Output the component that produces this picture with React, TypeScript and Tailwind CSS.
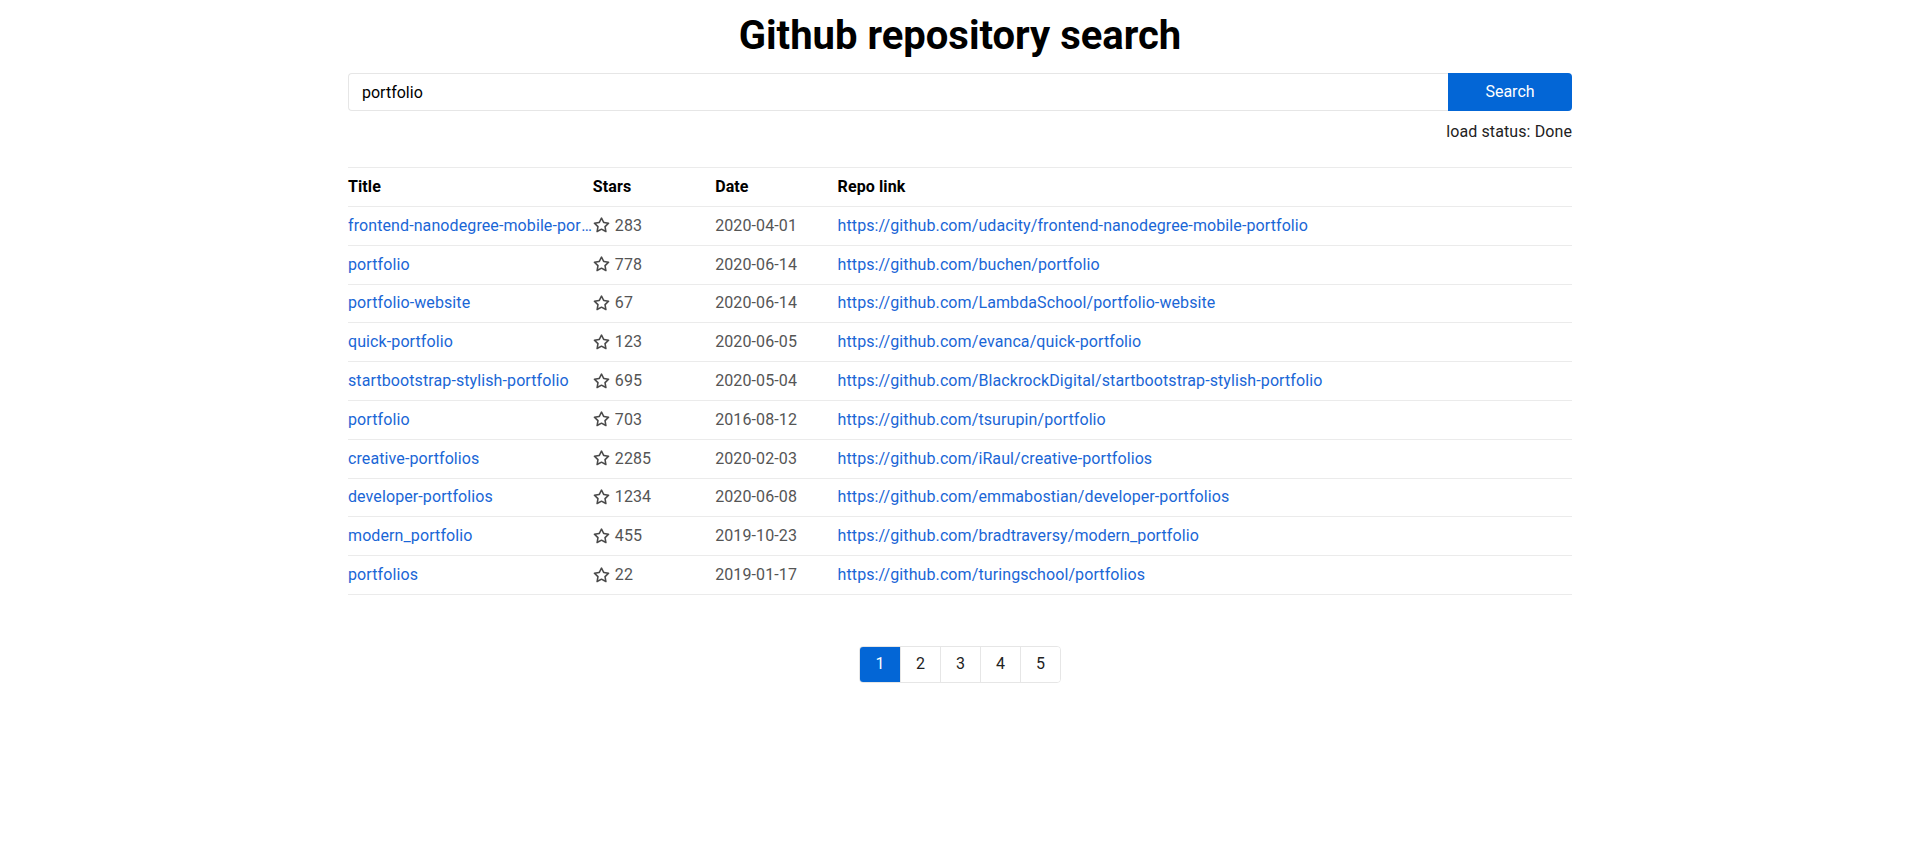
import React, { useState } from 'react';

type Repo = {
  title: string;
  stars: number;
  date: string;
  url: string;
};

const repos: Repo[] = [
  { title: 'frontend-nanodegree-mobile-portfolio', stars: 283, date: '2020-04-01', url: 'https://github.com/udacity/frontend-nanodegree-mobile-portfolio' },
  { title: 'portfolio', stars: 778, date: '2020-06-14', url: 'https://github.com/buchen/portfolio' },
  { title: 'portfolio-website', stars: 67, date: '2020-06-14', url: 'https://github.com/LambdaSchool/portfolio-website' },
  { title: 'quick-portfolio', stars: 123, date: '2020-06-05', url: 'https://github.com/evanca/quick-portfolio' },
  { title: 'startbootstrap-stylish-portfolio', stars: 695, date: '2020-05-04', url: 'https://github.com/BlackrockDigital/startbootstrap-stylish-portfolio' },
  { title: 'portfolio', stars: 703, date: '2016-08-12', url: 'https://github.com/tsurupin/portfolio' },
  { title: 'creative-portfolios', stars: 2285, date: '2020-02-03', url: 'https://github.com/iRaul/creative-portfolios' },
  { title: 'developer-portfolios', stars: 1234, date: '2020-06-08', url: 'https://github.com/emmabostian/developer-portfolios' },
  { title: 'modern_portfolio', stars: 455, date: '2019-10-23', url: 'https://github.com/bradtraversy/modern_portfolio' },
  { title: 'portfolios', stars: 22, date: '2019-01-17', url: 'https://github.com/turingschool/portfolios' },
];

// octicon star-16
const StarIcon = () => (
  <svg viewBox="0 0 16 16" width="17" height="17" className="mr-[5px] shrink-0 fill-[#4a4a4a]">
    <path d="M8 .25a.75.75 0 0 1 .673.418l1.882 3.815 4.21.612a.75.75 0 0 1 .416 1.279l-3.046 2.97.719 4.192a.751.751 0 0 1-1.088.791L8 12.347l-3.766 1.98a.75.75 0 0 1-1.088-.79l.72-4.194L.818 6.374a.75.75 0 0 1 .416-1.28l4.21-.611L7.327.668A.75.75 0 0 1 8 .25Zm0 2.445L6.615 5.5a.75.75 0 0 1-.564.41l-3.097.45 2.24 2.184a.75.75 0 0 1 .216.664l-.528 3.084 2.769-1.456a.75.75 0 0 1 .698 0l2.77 1.456-.53-3.084a.75.75 0 0 1 .216-.664l2.24-2.183-3.096-.45a.75.75 0 0 1-.564-.41L8 2.694Z" />
  </svg>
);

const App = () => {
  const [query, setQuery] = useState('portfolio');
  const [page, setPage] = useState(1);

  return (
    <div className="min-h-screen bg-white font-[Roboto,sans-serif] text-[#222]">
      <div className="mx-auto w-[1224px]">
        <h1 className="mt-3 text-center text-[40px] font-bold leading-[48px] text-black">
          Github repository search
        </h1>

        <form
          className="mt-[13px] flex h-[38px]"
          onSubmit={(e) => e.preventDefault()}
        >
          <input
            value={query}
            onChange={(e) => setQuery(e.target.value)}
            className="h-full flex-1 rounded-l border border-r-0 border-[#e6e6e6] pl-[13px] text-base text-black outline-none"
          />
          <button
            type="submit"
            className="h-full w-[124px] rounded-r bg-[#0366d6] text-base text-white"
          >
            Search
          </button>
        </form>

        <div className="mt-[9px] text-right text-base leading-6 tracking-[0.1px]">load status: Done</div>

        <div className="mt-[23px] text-base tracking-[0.1px]">
          <div className="grid h-[40px] grid-cols-[2fr_1fr_1fr_6fr] items-center border-y border-[#ebebeb] font-bold text-black">
            <div>Title</div>
            <div>Stars</div>
            <div>Date</div>
            <div>Repo link</div>
          </div>
          {repos.map((repo, i) => (
            <div
              key={i}
              className="grid h-[38.8px] grid-cols-[2fr_1fr_1fr_6fr] items-center border-b border-[#ebebeb]"
            >
              <a href={repo.url} className="overflow-hidden text-ellipsis whitespace-nowrap text-[#1a66d6]">
                {repo.title}
              </a>
              <div className="flex items-center text-[#555]">
                <StarIcon />
                {repo.stars}
              </div>
              <div className="text-[#555]">{repo.date}</div>
              <a href={repo.url} className="text-[#1a66d6]">
                {repo.url}
              </a>
            </div>
          ))}
        </div>

        <div className="mt-[51px] flex justify-center">
          <div className="flex overflow-hidden rounded border border-[#e6e6e6]">
            {[1, 2, 3, 4, 5].map((n) => (
              <button
                key={n}
                onClick={() => setPage(n)}
                className={
                  n === page
                    ? 'h-[35px] w-10 bg-[#0366d6] text-base text-white'
                    : 'h-[35px] w-10 border-l border-[#e6e6e6] bg-white text-base text-[#222]'
                }
              >
                {n}
              </button>
            ))}
          </div>
        </div>
      </div>
    </div>
  );
};

export default App;
